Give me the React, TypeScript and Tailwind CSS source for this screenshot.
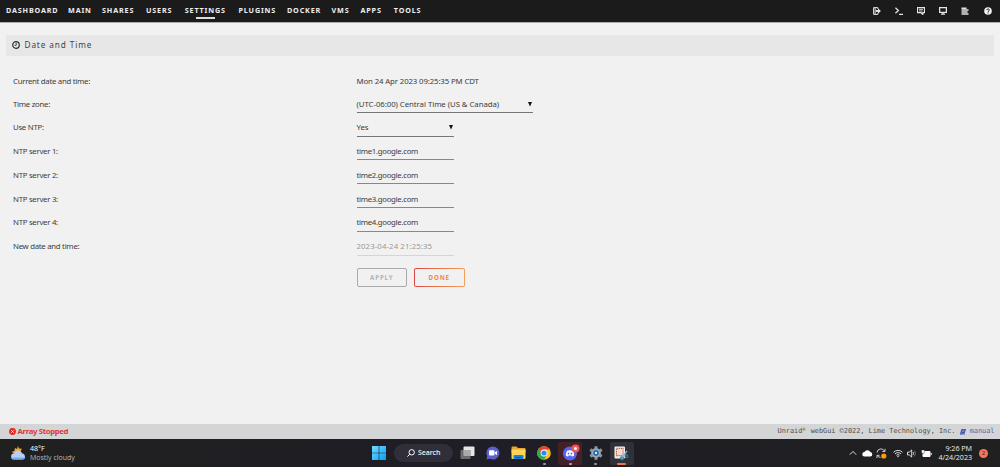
import type { ReactNode } from "react";
import clsx from "clsx";

const NAV = [
  { label: "DASHBOARD", width: "w-[62px]" },
  { label: "MAIN", width: "w-[34px]" },
  { label: "SHARES", width: "w-[44px]" },
  { label: "USERS", width: "w-[38.8px]" },
  { label: "SETTINGS", width: "w-[53.7px]", active: true },
  { label: "PLUGINS", width: "w-[48.5px]" },
  { label: "DOCKER", width: "w-[44.5px]" },
  { label: "VMS", width: "w-[29px]" },
  { label: "APPS", width: "w-[33.3px]" },
  { label: "TOOLS", width: "w-[40px]" },
];

const SERVERS = [
  "time1.google.com",
  "time2.google.com",
  "time3.google.com",
  "time4.google.com",
];

function NavIcons() {
  return (
    <div className="ml-auto flex items-center gap-[14.2px] pr-[8.5px] text-[#e4e4e4]">
      <svg width="8" height="8" viewBox="0 0 8 8" fill="none" stroke="currentColor">
        <path d="M4.8 2V.6H.6v6.8h4.2V6M2.1.8v6.4" strokeWidth="1" />
        <path d="M3 3h2V1.3L7.9 4 5 6.700V5H3z" fill="currentColor" stroke="none" />
      </svg>
      <svg width="8" height="8" viewBox="0 0 8 8" fill="none" stroke="currentColor" strokeWidth="1.3">
        <path d="M.4.7 3.4 3.500.4 6.300M4 7.300h4" />
      </svg>
      <svg width="8" height="8" viewBox="0 0 8 8" fill="none" stroke="currentColor">
        <path d="M.5.700h7v5H5.800v1.700L4 5.700H.5z" strokeWidth="1.2" />
        <path d="M2 2.300h4M2 4h3.500" strokeWidth=".9" />
      </svg>
      <svg width="8" height="8" viewBox="0 0 8 8" fill="none" stroke="currentColor">
        <path d="M.6.700h6.800v4.700H.6z" strokeWidth="1.3" />
        <path d="M2 7.200h4M4 5.500v1.500" strokeWidth="1.300" />
      </svg>
      <svg width="8" height="8" viewBox="0 0 8 8" fill="none" stroke="currentColor" strokeWidth="1.500">
        <path d="M.5 1.200h5M.5 3.100h7M.5 5h6M.5 6.900h7" />
      </svg>
      <svg width="8" height="8" viewBox="0 0 8 8" fill="none">
        <circle cx="4" cy="4" r="3.800" fill="#f4f4f4" />
        <path d="M2.800 3.100c0-1.600 2.500-1.500 2.500-.1 0 .9-1.200.9-1.200 1.900M4.100 5.500v1" stroke="#1c1b1b" strokeWidth="1" />
      </svg>
    </div>
  );
}

function Row({ label, className, children }: { label: string; className: string; children: ReactNode }) {
  return (
    <div className={clsx("flex", className)}>
      <div className="w-[343.5px] shrink-0 leading-[12px] tracking-[-.28px]">{label}</div>
      {children}
    </div>
  );
}

function Select({ value, width }: { value: string; width: string }) {
  return (
    <div className={clsx("flex h-[15.2px] items-start justify-between border-b border-[#777] leading-[12px] tracking-[-.05px]", width)}>
      <span>{value}</span>
      <svg width="4" height="5" viewBox="0 0 4 5" className="mt-[4px] mr-px">
        <path d="M0 0h4L2 4.500z" fill="#111" />
      </svg>
    </div>
  );
}

function WindowsLogo() {
  return (
    <svg width="14" height="14" viewBox="0 0 14 14">
      <defs>
        <linearGradient id="win" x1="0" y1="0" x2="1" y2="1">
          <stop offset="0" stopColor="#72dcff" />
          <stop offset="1" stopColor="#0a9cf5" />
        </linearGradient>
      </defs>
      <path d="M0 0h6.700v6.700H0zM7.300 0H14v6.700H7.300zM0 7.300h6.700V14H0zM7.300 7.300H14V14H7.300z" fill="url(#win)" />
    </svg>
  );
}

function TaskView() {
  return (
    <svg width="15" height="14" viewBox="0 0 15 14">
      <rect x="3.500" y=".5" width="11" height="9.500" rx="1" fill="#e5e5e5" />
      <rect x=".5" y="4" width="10" height="9" rx="1" fill="#777" fillOpacity=".9" />
      <path d="M3.500 4h7v6h-6a1 1 0 0 1-1-1z" fill="#aaa" />
    </svg>
  );
}

function ChatIcon() {
  return (
    <svg width="14" height="14" viewBox="0 0 14 14">
      <path d="M7 .5A6.500 6.500 0 1 1 4 12.800L.6 13.500 1.200 10A6.500 6.500 0 0 1 7 .5z" fill="#5c60cb" />
      <rect x="3" y="4.300" width="5.500" height="5.300" rx="1" fill="#fff" />
      <path d="m9 6.200 2-1.400v4.400L9 7.800z" fill="#fff" />
    </svg>
  );
}

function FolderIcon() {
  return (
    <svg width="15" height="14" viewBox="0 0 15 14">
      <path d="M.5 1.500a1 1 0 0 1 1-1h4L7 2h6.500a1 1 0 0 1 1 1v4H.5z" fill="#e8a62c" />
      <path d="M.5 3.500h14V12a1 1 0 0 1-1 1h-12a1 1 0 0 1-1-1z" fill="#ffd45a" />
      <path d="M2.500 13V10a1 1 0 0 1 1-1h8a1 1 0 0 1 1 1v3z" fill="#1785d3" />
      <path d="M4.500 11h6v1h-6z" fill="#075e9f" />
    </svg>
  );
}

function ChromeIcon() {
  return (
    <svg width="14" height="14" viewBox="0 0 14 14">
      <circle cx="7" cy="7" r="6.800" fill="#fbc116" />
      <path d="M7 7 1.100 3.600A6.800 6.800 0 0 1 12.900 3.600H7z" fill="#e84335" />
      <path d="M1.100 3.600A6.800 6.800 0 0 0 7 13.800L9.900 8.700 7 7z" fill="#30a852" />
      <circle cx="7" cy="7" r="3.400" fill="#fff" />
      <circle cx="7" cy="7" r="2.600" fill="#3b82f0" />
    </svg>
  );
}

function DiscordIcon() {
  return (
    <svg width="17" height="17" viewBox="0 0 17 17" className="overflow-visible">
      <circle cx="8" cy="8.500" r="7" fill="#5865f2" />
      <path d="M5.100 5.800Q8 4.700 10.900 5.800q1.400 2.200 1.300 4.700-1.100 1-2.300 1l-.5-.9H6.600l-.5.9q-1.200 0-2.300-1-.1-2.500 1.300-4.700z" fill="#fff" />
      <circle cx="6.500" cy="8.500" r=".9" fill="#5865f2" />
      <circle cx="9.500" cy="8.500" r=".9" fill="#5865f2" />
      <circle cx="13.500" cy="3.500" r="4" fill="#f25555" />
      <circle cx="13.500" cy="3.500" r="1.500" fill="#fff" />
    </svg>
  );
}

function GearIcon() {
  return (
    <svg width="14" height="14" viewBox="0 0 14 14">
      <g stroke="#8b949b" strokeWidth="3">
        <path d="M7 .3v13.400M1.200 3.650l11.600 6.700M1.200 10.350l11.600-6.700" />
      </g>
      <circle cx="7" cy="7" r="5" fill="#8b949b" />
      <circle cx="7" cy="7" r="3.500" fill="#c5d3dd" />
      <circle cx="7" cy="7" r="2.900" fill="#1769b0" />
      <circle cx="7" cy="7" r="1.200" fill="#e6edf2" />
    </svg>
  );
}

function SnipIcon() {
  return (
    <svg width="15" height="15" viewBox="0 0 15 15" fill="none">
      <rect x=".5" y=".5" width="10.500" height="12" rx="1" fill="#f5f0ed" />
      <path d="M2.500 2.500h6.500v7H2.500z" stroke="#d75534" strokeWidth="1.300" strokeDasharray="1.300 .8" />
      <path d="M4 4h3.500v4H4z" fill="#e5dfdc" />
      <path d="M13 5 8.500 10.500M10 8l1.500 1.500" stroke="#9eb2c0" strokeWidth="1.200" />
      <circle cx="8" cy="12.300" r="1.500" stroke="#1685bd" strokeWidth="1.200" />
      <circle cx="12.500" cy="10.200" r="1.400" stroke="#1685bd" strokeWidth="1.200" />
    </svg>
  );
}

function TaskTile({ children, tile, mark }: { children: ReactNode; tile?: string; mark?: string }) {
  return (
    <div className={clsx("relative flex h-[23px] w-[24px] shrink-0 items-center justify-center rounded-[2px]", tile)}>
      {children}
      {mark && <span className={clsx("absolute bottom-0 h-[1.5px] rounded-full", mark)} />}
    </div>
  );
}

function Tray() {
  return (
    <div className="ml-auto flex items-center text-[#eee]">
      <svg width="8" height="6" viewBox="0 0 8 6" fill="none" stroke="currentColor" strokeWidth=".9">
        <path d="m.8 4.700 3.200-3.300 3.200 3.300" />
      </svg>
      <svg width="11" height="8" viewBox="0 0 10 7" className="ml-[5px]">
        <path d="M2.300 6.700a2 2 0 0 1-.1-4A3 3 0 0 1 7.600 2.600a2.100 2.100 0 0 1 .2 4.100z" fill="#fff" />
      </svg>
      <svg width="11" height="11" viewBox="0 0 11 11" fill="none" className="ml-[3px]">
        <path d="M1 4.500a4 4 0 0 1 7.500-1.500M9 .8v2.700H6.300M1 10V7.300h2.500M1.500 7.500a4 4 0 0 0 3 2" stroke="#ddd" strokeWidth=".9" />
        <circle cx="7.800" cy="8" r="2.600" fill="#ff9a0c" />
      </svg>
      <svg width="10" height="9" viewBox="0 0 10 9" fill="none" stroke="currentColor" strokeWidth=".9" className="ml-[6px]">
        <path d="M.5 3.300a6.300 6.300 0 0 1 9 0M2 4.900a4.200 4.200 0 0 1 6 0M3.500 6.300a2.100 2.100 0 0 1 3 0" />
        <circle cx="5" cy="7.500" r=".7" fill="currentColor" stroke="none" />
      </svg>
      <svg width="10" height="9" viewBox="0 0 10 9" fill="none" stroke="currentColor" strokeWidth=".9" className="ml-[4px]">
        <path d="M.5 3.200h1.700L4.700 1v7L2.200 5.900H.5zM6.100 3.100q1 1.400 0 2.800" />
        <path d="M7.500 1.700q2 2.800 0 5.600" stroke="#777" />
      </svg>
      <svg width="11" height="9" viewBox="0 0 11 9" className="ml-[4px]">
        <path d="M3 2.500h6v5H2v-2z" fill="#fff" stroke="#fff" />
        <path d="M9.800 4h.9v2h-.9z" fill="#fff" />
        <path d="M.5 1h3v2a1.500 1.500 0 0 1-3 0z" fill="#fff" stroke="#1f1f1f" strokeWidth=".4" />
      </svg>
      <div className="ml-[3px] w-[37px] text-right text-[7.200px] leading-[9px] tracking-[-.05px] whitespace-nowrap">
        <div>9:26 PM</div>
        <div>4/24/2023</div>
      </div>
      <div className="mr-[12px] ml-[7px] flex size-[9px] items-center justify-center rounded-full bg-[#f5765c] text-[6px] leading-none text-[#33201d]">
        2
      </div>
    </div>
  );
}

export default function App() {
  return (
    <div className="flex h-[467px] w-[1000px] flex-col overflow-hidden bg-[#f1f1f1] font-['Noto_Sans',sans-serif] text-[7.800px] text-[#3c3c3c]">
      <header className="flex h-[22px] shrink-0 items-center bg-[#1c1b1b] pl-[6px] shadow-[0_1px_0_#aaa]">
        {NAV.map((item) => (
          <div key={item.label} className={clsx("relative pb-[2px] text-[7.200px] leading-[10px] font-bold tracking-[.85px] text-[#efefef]", item.width)}>
            {item.label}
            {item.active && <span className="absolute top-[12px] left-[11px] h-[1.500px] w-[19px] bg-[#ddd]" />}
          </div>
        ))}
        <NavIcons />
      </header>

      <main className="flex-1">
        <div className="mx-[6px] mt-[13px] flex h-[20.500px] items-center bg-[#e7e7e7] pl-[5.500px]">
          <svg width="8" height="8" viewBox="0 0 8 8" fill="none" stroke="#303030">
            <circle cx="4" cy="4" r="3.300" strokeWidth="1.200" />
            <path d="M4.200 1.800v2.500H2.500" strokeWidth=".9" />
          </svg>
          <span className="ml-[5px] text-[8.200px] leading-[12px] tracking-[.9px] text-[#444]">Date and Time</span>
        </div>

        <div className="pt-[19.800px] pl-[13px]">
          <Row label="Current date and time:" className="h-[22.500px]">
            <div className="leading-[12px] tracking-[-.12px]">Mon 24 Apr 2023 09:25:35 PM CDT</div>
          </Row>
          <Row label="Time zone:" className="h-[23.700px]">
            <Select value="(UTC-06:00) Central Time (US & Canada)" width="w-[176px]" />
          </Row>
          <Row label="Use NTP:" className="h-[23.500px]">
            <Select value="Yes" width="w-[97.500px]" />
          </Row>
          {SERVERS.map((server, i) => (
            <Row key={server} label={`NTP server ${i + 1}:`} className="h-[23.800px]">
              <div className="h-[15.500px] w-[97.500px] border-b border-[#888] leading-[13.500px] tracking-[-.3px]">{server}</div>
            </Row>
          ))}
          <Row label="New date and time:" className="h-[28px]">
            <div className="h-[15.500px] w-[97.500px] border-b border-[#d5d5d5] leading-[13.500px] tracking-[.1px] text-[#999]">2023-04-24 21:25:35</div>
          </Row>
          <div className="flex gap-[7px] pl-[343.500px] text-[6.200px] font-bold tracking-[.85px]">
            <div className="flex h-[18.500px] w-[50.500px] items-center justify-center rounded-[2px] border border-[#aaa] text-[#b5b5b5]">
              APPLY
            </div>
            <div className="h-[18.500px] w-[50.500px] rounded-[2px] bg-linear-to-r from-[#dc4545] to-[#f4a052] p-px">
              <div className="flex h-full items-center justify-center rounded-[1px] bg-[#f1f1f1] text-[#f18b38]">DONE</div>
            </div>
          </div>
        </div>
      </main>

      <footer className="flex h-[15px] shrink-0 items-center bg-[#d4d5d6] pr-[5.500px] pl-[9px]">
        <svg width="7" height="7" viewBox="0 0 7 7">
          <circle cx="3.500" cy="3.500" r="3.400" fill="#e22828" />
          <path d="m2.300 2.300 2.400 2.400m0-2.400L2.300 4.700" stroke="#fff" strokeWidth=".9" />
        </svg>
        <span className="ml-[1.500px] text-[7.800px] font-bold tracking-[-.36px] text-[#e03535]">Array Stopped</span>
        <div className="ml-auto flex items-center font-['DejaVu_Sans_Mono',monospace] text-[6.880px] text-[#4d4d4d]">
          <span className="whitespace-pre">
            Unraid<span className="inline-block w-[4.140px] align-[2px] text-[5px] leading-none">®</span> webGui ©2022, Lime Technology, Inc.{" "}
          </span>
          <svg width="6" height="6" viewBox="0 0 6 6">
            <path d="M1.500 0H6L4.700 4.800H.8q-.5.600.2.600h4V6H.5Q-.2 5.700 0 4.700z" fill="#4257b5" />
            <path d="M2.300 1.300h2.200M2 2.500h2.200" stroke="#d4d5d6" strokeWidth=".4" />
          </svg>
          <span className="ml-[4px] text-[#5264ad]">manual</span>
        </div>
      </footer>

      <div className="flex h-[28px] shrink-0 items-center bg-linear-to-r from-[#202020] via-[#1f1d26] to-[#202020] font-['Open_Sans',sans-serif]">
        <div className="flex w-[366.500px] items-center pl-[11px]">
          <svg width="15" height="14" viewBox="0 0 15 14">
            <path d="M7 0 8 2.500l3 .2-1.500 2.500L11 8H3L.8 5.700l2.600-.8L4 2l2 1z" fill="#f1a52b" />
            <path d="M3.300 13.500a3 3 0 0 1-.3-6 4.300 4.300 0 0 1 8.100-.3A3.200 3.200 0 0 1 11.500 13.500z" fill="#b4cef7" />
            <path d="M1 11.500q1 2 2.500 2h8q2 0 3-2z" fill="#7da6ea" />
          </svg>
          <div className="ml-[4px] text-[7px] leading-[9.500px]">
            <div className="text-white">48°F</div>
            <div className="text-[#b9b9b9]">Mostly cloudy</div>
          </div>
        </div>
        <div className="flex items-center">
          <TaskTile><WindowsLogo /></TaskTile>
          <div className="mr-[2px] ml-[3.500px] flex h-[18px] w-[59px] items-center rounded-full bg-[#302e38] pl-[13px] text-[7px] font-semibold text-[#eee]">
            <svg width="8" height="8" viewBox="0 0 8 8" fill="none" stroke="#fff" strokeWidth="1">
              <circle cx="4.700" cy="3.300" r="2.700" />
              <path d="M2.700 5.300.4 7.600" />
            </svg>
            <span className="ml-[3px] tracking-[-.1px]">Search</span>
          </div>
          <div className="flex gap-[1.800px]">
            <TaskTile><TaskView /></TaskTile>
            <TaskTile><ChatIcon /></TaskTile>
            <TaskTile><FolderIcon /></TaskTile>
            <TaskTile mark="w-[3px] bg-[#999]"><ChromeIcon /></TaskTile>
            <TaskTile tile="bg-[#442126]" mark="w-[3px] bg-[#f08a94]"><DiscordIcon /></TaskTile>
            <TaskTile mark="w-[3px] bg-[#999]"><GearIcon /></TaskTile>
            <TaskTile tile="bg-[#303039]" mark="w-[9px] bg-[#ed735c]"><SnipIcon /></TaskTile>
          </div>
        </div>
        <Tray />
      </div>
    </div>
  );
}
